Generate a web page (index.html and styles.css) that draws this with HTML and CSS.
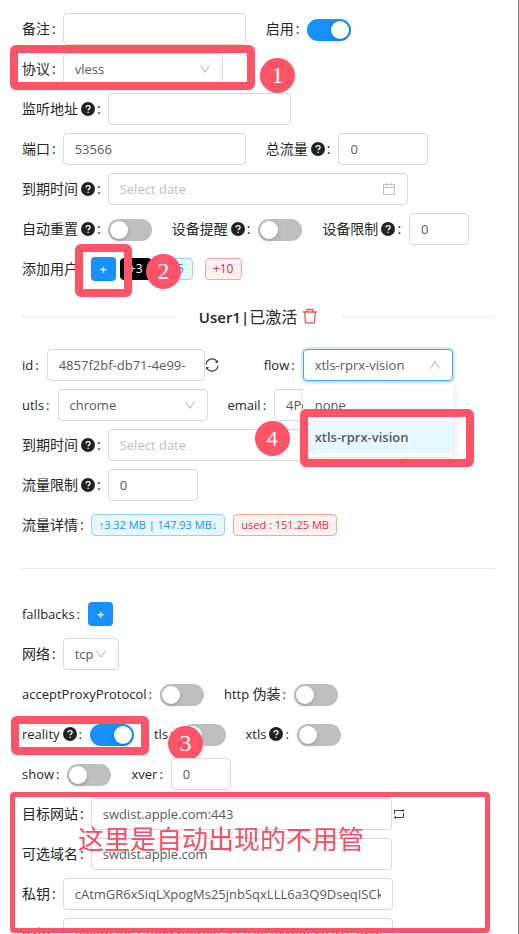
FILE: index.html
```
<!DOCTYPE html>
<html lang="zh-CN">

<head>
    <meta charset="UTF-8">
    <meta name="viewport" content="width=device-width, initial-scale=1.0">
    <title>添加入站</title>
    <link rel="stylesheet" href="styles.css">
</head>

<body>
    <!-- 图标 -->
    <svg class="sprite" aria-hidden="true">
        <symbol id="icon-help" viewBox="0 0 14 14">
            <circle cx="7" cy="7" r="7" fill="#222" />
            <path d="M4.9 5.5c0-1.2.9-1.9 2.1-1.9s2.1.7 2.1 1.8c0 1.5-2 1.4-2 2.9" fill="none" stroke="#fff" stroke-width="1.3" />
            <circle cx="7.1" cy="10.2" r=".8" fill="#fff" />
        </symbol>
        <symbol id="icon-down" viewBox="0 0 12 12">
            <path d="M1.500 2.500L6 9l4.500-6.500" fill="none" stroke="#bfbfbf" stroke-width="1.1" />
        </symbol>
        <symbol id="icon-up" viewBox="0 0 12 12">
            <path d="M1.500 9.500L6 3l4.500 6.500" fill="none" stroke="#bfbfbf" stroke-width="1.1" />
        </symbol>
        <symbol id="icon-calendar" viewBox="0 0 14 14">
            <path d="M1.500 2.500h11v10h-11zM1.500 5.500h11M4.500 .8v3M9.500 .8v3" fill="none" stroke="#bfbfbf" />
        </symbol>
    </svg>

    <main class="panel">
        <form>
            <!-- 基本设置 -->
            <div class="row">
                <label for="remark">备注</label>
                <input type="text" id="remark" class="w-normal">
                <label for="enable" class="next">启用</label>
                <input type="checkbox" id="enable" class="switch" checked>
            </div>

            <div class="row">
                <label for="protocol">协议</label>
                <span class="select w-protocol">
                    <select id="protocol"><option>vless</option></select>
                    <svg class="arrow"><use href="#icon-down" /></svg>
                </span>
                <span class="mark mark-protocol"></span>
                <span class="badge badge-protocol">1</span>
            </div>

            <div class="row">
                <label for="listen">监听地址<svg class="help"><use href="#icon-help" /></svg></label>
                <input type="text" id="listen" class="w-normal">
            </div>

            <div class="row">
                <label for="port">端口</label>
                <input type="text" id="port" class="w-normal" value="53566">
                <label for="total" class="next">总流量<svg class="help"><use href="#icon-help" /></svg></label>
                <input type="text" id="total" class="w-number" value="0">
            </div>

            <div class="row">
                <label for="expiry">到期时间<svg class="help"><use href="#icon-help" /></svg></label>
                <span class="date">
                    <input type="text" id="expiry" placeholder="Select date">
                    <svg class="calendar"><use href="#icon-calendar" /></svg>
                </span>
            </div>

            <div class="row">
                <label for="autoReset">自动重置<svg class="help"><use href="#icon-help" /></svg></label>
                <input type="checkbox" id="autoReset" class="switch">
                <label for="deviceAlert" class="next">设备提醒<svg class="help"><use href="#icon-help" /></svg></label>
                <input type="checkbox" id="deviceAlert" class="switch">
                <label for="deviceLimit" class="next">设备限制<svg class="help"><use href="#icon-help" /></svg></label>
                <input type="text" id="deviceLimit" class="w-small" value="0">
            </div>

            <div class="row">
                <label for="addUser">添加用户</label>
                <button type="button" id="addUser" class="add">+</button>
                <button type="button" class="tag tag-black">+3</button>
                <button type="button" class="tag tag-blue tag-five">+5</button>
                <button type="button" class="tag tag-red tag-ten">+10</button>
                <span class="mark mark-add"></span>
                <span class="badge badge-add">2</span>
            </div>

            <!-- 用户 -->
            <div class="divider">
                <h2><span class="user">User1|</span>已激活</h2>
                <button type="button" class="icon-button" aria-label="删除">
                    <svg class="trash" viewBox="0 0 14 16">
                        <path d="M0 4h14M4 4V1.500h6V4M1.700 4l.8 10.800h9L12.300 4" fill="none" stroke="#e4595c" stroke-width="1.300" />
                    </svg>
                </button>
            </div>

            <div class="row">
                <label for="userId" class="en">id</label>
                <input type="text" id="userId" class="w-id" value="4857f2bf-db71-4e99-">
                <button type="button" class="icon-button" aria-label="刷新">
                    <svg class="sync" viewBox="0 0 14 14">
                        <path d="M1 6.500A6 6 0 0 1 12.200 4M13 7.500A6 6 0 0 1 1.800 10" fill="none" stroke="#444" stroke-width="1.200" />
                        <path d="M12.900 2v3H10zM1.100 12V9H4z" fill="#444" />
                    </svg>
                </button>
                <label for="flow" class="en flow-label">flow</label>
                <span class="select select-open w-select">
                    <select id="flow"><option>xtls-rprx-vision</option><option>none</option></select>
                    <svg class="arrow"><use href="#icon-up" /></svg>
                    <ul class="dropdown" role="listbox" aria-label="flow">
                        <li role="option">none</li>
                        <li role="option" class="selected" aria-selected="true">xtls-rprx-vision</li>
                    </ul>
                    <span class="mark mark-flow"></span>
                    <span class="badge badge-flow">4</span>
                </span>
            </div>

            <div class="row">
                <label for="utls" class="en">utls</label>
                <span class="select w-select">
                    <select id="utls"><option>chrome</option></select>
                    <svg class="arrow"><use href="#icon-down" /></svg>
                </span>
                <label for="email" class="en next">email</label>
                <input type="text" id="email" class="w-email" value="4Po">
            </div>

            <div class="row">
                <label for="userExpiry">到期时间<svg class="help"><use href="#icon-help" /></svg></label>
                <span class="date">
                    <input type="text" id="userExpiry" placeholder="Select date">
                    <svg class="calendar"><use href="#icon-calendar" /></svg>
                </span>
            </div>

            <div class="row">
                <label for="userLimit">流量限制<svg class="help"><use href="#icon-help" /></svg></label>
                <input type="text" id="userLimit" class="w-number" value="0">
            </div>

            <div class="row">
                <span class="label">流量详情</span>
                <span class="tag tag-blue tag-data">↑3.32 MB | 147.93 MB↓</span>
                <span class="tag tag-red tag-data">used : 151.25 MB</span>
            </div>

            <hr>

            <!-- 传输设置 -->
            <div class="row">
                <label for="fallbacks" class="en">fallbacks</label>
                <button type="button" id="fallbacks" class="add">+</button>
            </div>

            <div class="row">
                <label for="network">网络</label>
                <span class="select w-network">
                    <select id="network"><option>tcp</option></select>
                    <svg class="arrow"><use href="#icon-down" /></svg>
                </span>
            </div>

            <div class="row">
                <label for="acceptProxy" class="en">acceptProxyProtocol</label>
                <input type="checkbox" id="acceptProxy" class="switch">
                <label for="http" class="en next">http <span class="zh">伪装</span></label>
                <input type="checkbox" id="http" class="switch">
            </div>

            <div class="row">
                <label for="reality" class="en">reality<svg class="help"><use href="#icon-help" /></svg></label>
                <input type="checkbox" id="reality" class="switch" checked>
                <label for="tls" class="en next">tls</label>
                <input type="checkbox" id="tls" class="switch">
                <label for="xtls" class="en next">xtls<svg class="help"><use href="#icon-help" /></svg></label>
                <input type="checkbox" id="xtls" class="switch">
                <span class="mark mark-reality"></span>
                <span class="badge badge-reality">3</span>
            </div>

            <div class="row">
                <label for="show" class="en">show</label>
                <input type="checkbox" id="show" class="switch">
                <label for="xver" class="en next">xver</label>
                <input type="text" id="xver" class="w-small" value="0">
            </div>

            <!-- reality 设置 -->
            <div class="auto">
                <div class="row">
                    <label for="dest">目标网站</label>
                    <input type="text" id="dest" class="w-wide" value="swdist.apple.com:443">
                    <button type="button" class="icon-button" aria-label="切换">
                        <svg class="swap" viewBox="0 0 14 14">
                            <path d="M2.500 7V3.500H12M11.500 6v4.500H2.500" fill="none" stroke="#444" />
                            <path d="M10.500 1.800l2.200 1.700-2.200 1.700zM4 8.800l-2.200 1.700L4 12.200z" fill="#444" />
                        </svg>
                    </button>
                </div>

                <div class="row">
                    <label for="serverNames">可选域名</label>
                    <input type="text" id="serverNames" class="w-wide" value="swdist.apple.com">
                </div>

                <div class="row">
                    <label for="privateKey">私钥</label>
                    <input type="text" id="privateKey" class="w-key" value="cAtmGR6xSiqLXpogMs25jnbSqxLLL6a3Q9DseqISCk">
                </div>

                <div class="row">
                    <label for="publicKey">公钥</label>
                    <input type="text" id="publicKey" class="w-key" value="VwomaPCT7uqJSnWrokGYz2DeFBMnqLXtHrcs3mwae">
                </div>
                <span class="mark mark-auto"></span>
                <p class="note">这里是自动出现的不用管</p>
            </div>
        </form>
    </main>
</body>

</html>
```
FILE: styles.css
```
* {
    box-sizing: border-box;
}

body {
    margin: 0;
    background-color: #fff;
    color: #262626;
    font-family: "Open Sans", "Noto Sans CJK SC", sans-serif;
    font-size: 14px;
}

.sprite {
    position: absolute;
    width: 0;
    height: 0;
}

.panel {
    height: 100vh;
    overflow: hidden;
    padding: 9px 24px 0 22px;
    border-right: 1px solid #777;
}

.row {
    position: relative;
    display: flex;
    align-items: center;
    height: 40px;
}

label,
.label {
    display: flex;
    align-items: center;
    line-height: 18px;
    white-space: pre;
}

label::after,
.label::after {
    content: ":";
    margin: 0 7px 0 2px;
}

.en {
    font-size: 13px;
}

.zh {
    font-size: 14px;
}

.en::after,
.next::after {
    margin-right: 8px;
}

.next {
    margin-left: 20px;
}

.help {
    width: 14px;
    height: 14px;
    margin-left: 3px;
}

input,
select,
button {
    font-family: inherit;
    font-size: 13px;
    color: #595959;
}

input[type="text"],
select {
    height: 32px;
    padding: 0 11px;
    border: 1px solid #d9d9d9;
    border-radius: 4px;
    background-color: #fff;
    outline: none;
}

input::placeholder {
    color: #bfbfbf;
}

.w-normal {
    width: 183px;
}

.w-protocol {
    width: 160px;
}

.w-number {
    width: 90px;
}

.w-small {
    width: 60px;
}

.w-id {
    width: 158px;
}

.w-select {
    width: 150px;
}

.w-email {
    width: 178px;
}

.w-network {
    width: 56px;
}

.w-wide {
    width: 301px;
}

.w-key {
    width: 330px;
}

/* 下拉框 */
.select,
.date {
    position: relative;
    display: flex;
}

.select select {
    width: 100%;
    appearance: none;
}

.arrow {
    position: absolute;
    top: 10px;
    right: 12px;
    width: 12px;
    height: 12px;
    pointer-events: none;
}

.select-open {
    z-index: 2;
}

.select-open select {
    border-color: #40a9ff;
    box-shadow: 0 0 0 2px rgba(24, 144, 255, 0.2);
}

.dropdown {
    position: absolute;
    top: 36px;
    left: 0;
    width: 100%;
    margin: 0;
    padding: 4px 0;
    list-style: none;
    font-size: 13px;
    color: #595959;
    background-color: #fff;
    border-radius: 4px;
    box-shadow: 0 2px 8px rgba(0, 0, 0, 0.15);
}

.dropdown li {
    padding: 0 12px;
    line-height: 32px;
}

.dropdown .selected {
    background-color: #e6f7ff;
    font-weight: 600;
}

/* 日期 */
.date {
    width: 300px;
}

.date input {
    width: 100%;
}

.calendar {
    position: absolute;
    top: 9px;
    right: 12px;
    width: 14px;
    height: 14px;
}

/* 开关 */
.switch {
    appearance: none;
    display: flex;
    width: 44px;
    height: 22px;
    margin: 2px 0 0;
    padding: 2px;
    border-radius: 11px;
    background-color: #bfbfbf;
}

.switch::before {
    content: "";
    width: 18px;
    height: 18px;
    border-radius: 50%;
    background-color: #fff;
    box-shadow: 0 2px 4px rgba(0, 35, 11, 0.2);
}

.switch:checked {
    justify-content: flex-end;
    background-color: #1890ff;
}

/* 按钮和标签 */
.add {
    width: 25px;
    height: 24px;
    padding: 0;
    border: none;
    border-radius: 4px;
    background-color: #1890ff;
    color: #fff;
    font-weight: 600;
}

.tag {
    height: 22px;
    margin-right: 8px;
    padding: 0 7px;
    border: 1px solid;
    border-radius: 4px;
    font-size: 12px;
    line-height: 20px;
    white-space: nowrap;
}

.tag-black {
    width: 32px;
    margin: 0 4px;
    border-color: #000;
    background-color: #000;
    color: #fff;
}

.tag-blue {
    border-color: #91d5ff;
    background-color: #e6f7ff;
    color: #1890ff;
}

.tag-red {
    border-color: #ffa39e;
    background-color: #fff1f0;
    color: #dc2f45;
}

.tag-data {
    font-family: "Open Sans", "Liberation Sans", sans-serif;
    font-size: 11px;
}

.tag-five {
    width: 32px;
    margin: 0 12px 0 5px;
}

.tag-ten {
    width: 37px;
}

.icon-button {
    display: flex;
    padding: 0;
    border: none;
    background: none;
}

.sync,
.swap {
    width: 14px;
    height: 14px;
}

.trash {
    width: 14px;
    height: 16px;
}

.flow-label {
    margin-left: 45px;
}

/* 分隔线 */
.divider {
    display: flex;
    align-items: center;
    height: 56px;
    padding-bottom: 2px;
}

.divider::before,
.divider::after {
    content: "";
    flex: 1;
    border-top: 1px solid #e8e8e8;
}

.divider::before {
    margin-right: 24px;
}

.divider::after {
    margin-left: 24px;
}

h2 {
    margin: 0 6px 0 0;
    font-size: 16px;
    font-weight: 400;
}

.user {
    font-size: 15px;
    font-weight: 600;
}

hr {
    margin: 23px 0 25px;
    border: none;
    border-top: 1px solid #e8e8e8;
}

/* 标注 */
.mark {
    position: absolute;
    border: 8px solid #ff5468;
    border-radius: 6px;
    pointer-events: none;
}

.badge {
    position: absolute;
    width: 35px;
    height: 35px;
    border-radius: 50%;
    background-color: #ff5468;
    color: #fff;
    font-family: "Liberation Serif", serif;
    font-size: 24px;
    line-height: 35px;
    text-align: center;
}

.mark-protocol {
    top: -4px;
    left: -12px;
    width: 245px;
    height: 45px;
}

.badge-protocol {
    top: 9px;
    left: 238px;
}

.mark-add {
    top: -5px;
    left: 53px;
    width: 57px;
    height: 53px;
}

.badge-add {
    top: 5px;
    left: 124px;
}

.mark-flow {
    top: 60px;
    left: -3px;
    width: 174px;
    height: 58px;
}

.badge-flow {
    top: 72px;
    left: -48px;
    font-family: "Open Sans", sans-serif;
    font-size: 20px;
}

.mark-reality {
    top: 2px;
    left: -11px;
    width: 138px;
    height: 39px;
}

.badge-reality {
    top: 12px;
    left: 146px;
}

.auto {
    position: relative;
}

.mark-auto {
    top: -2px;
    left: -12px;
    width: 480px;
    height: 141px;
    border-width: 5px;
    border-radius: 4px;
}

.note {
    position: absolute;
    top: 26px;
    left: 56px;
    margin: 0;
    color: #f25068;
    font-size: 26px;
    line-height: 38px;
    white-space: nowrap;
}
```
